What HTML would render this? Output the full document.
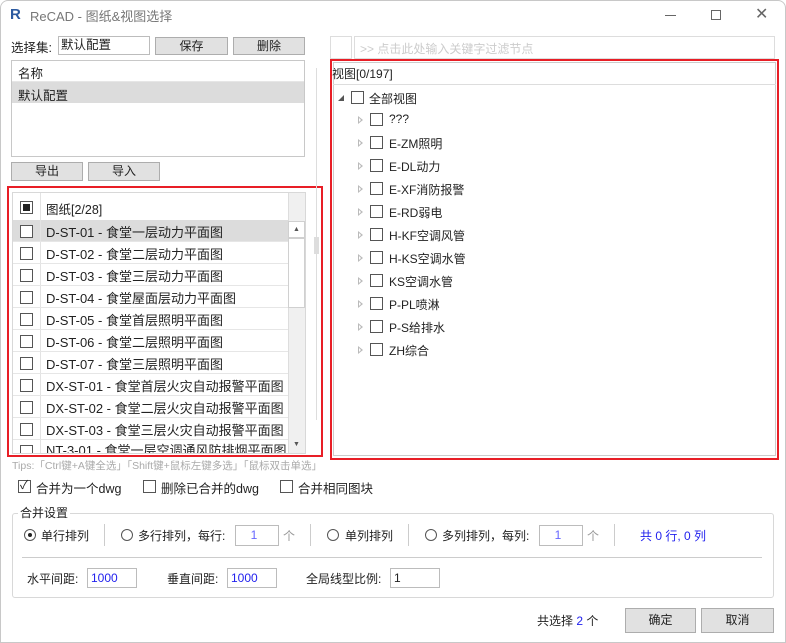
<!DOCTYPE html>
<html><head><meta charset="utf-8"><style>
*{box-sizing:border-box;margin:0;padding:0}
body{width:786px;height:643px;background:#fff;font-family:"Liberation Sans","Noto Sans CJK SC",sans-serif;font-size:12px;color:#222;position:relative;overflow:hidden}
.a{position:absolute;white-space:nowrap}
.btn{position:absolute;background:#e1e1e1;border:1px solid #adadad;text-align:center;font-size:12px;line-height:17px}
.inp{position:absolute;border:1px solid #bcbcbc;background:#fff}
.cb{position:absolute;width:13px;height:13px;border:1px solid #555;background:#fff}
.rb{position:absolute;width:12px;height:12px;border:1px solid #555;border-radius:50%;background:#fff}
.row{position:absolute;left:13px;width:275px;height:22px;border-bottom:1px solid #e6e6e6;font-size:13px}
.row .cb{left:7px;top:5px}
.row span{position:absolute;left:33px;top:2px}
.row i{position:absolute;left:27px;top:0;bottom:0;border-left:1px solid #e3e3e3}
.tri{position:absolute;width:0;height:0;border-top:4px solid transparent;border-bottom:4px solid transparent;border-left:5px solid #bbb}
.tri:after{content:"";position:absolute;left:-4px;top:-2px;border-top:2px solid transparent;border-bottom:2px solid transparent;border-left:2px solid #fff}
</style></head><body>
<div class="a" style="left:0;top:0;width:786px;height:643px;border:1px solid #c8c8c8;border-radius:8px 8px 0 0"></div>
<div class="a" style="left:10px;top:7px;width:12px;height:16px;font-weight:bold;color:#2c5aa0;font-size:15px;line-height:16px">R</div>
<div class="a" style="left:30px;top:6px;font-size:13px;color:#777">ReCAD - 图纸&amp;视图选择</div>
<div class="a" style="left:665px;top:15px;width:11px;border-top:1px solid #666"></div>
<div class="a" style="left:711px;top:10px;width:10px;height:10px;border:1px solid #666"></div>
<div class="a" style="left:755px;top:4px;font-size:16px;color:#666">✕</div>

<div class="a" style="left:11px;top:37px;font-size:12.5px">选择集:</div>
<div class="inp" style="left:58px;top:36px;width:92px;height:19px;padding-left:2px;font-size:12.5px;line-height:17px">默认配置</div>
<div class="btn" style="left:155px;top:37px;width:73px;height:18px">保存</div>
<div class="btn" style="left:233px;top:37px;width:72px;height:18px">删除</div>
<div class="a" style="left:11px;top:60px;width:294px;height:97px;border:1px solid #c8c8c8"></div>
<div class="a" style="left:12px;top:61px;width:292px;height:21px;border-bottom:1px solid #e6e6e6;padding:2px 6px;font-size:12.5px">名称</div>
<div class="a" style="left:12px;top:82px;width:292px;height:21px;background:#dcdcdc;padding:3px 6px;font-size:12.5px">默认配置</div>
<div class="btn" style="left:11px;top:162px;width:72px;height:19px">导出</div>
<div class="btn" style="left:88px;top:162px;width:72px;height:19px">导入</div>

<div class="a" style="left:12px;top:192px;width:294px;height:262px;border:1px solid #d8d8d8"></div>
<div class="a" style="left:13px;top:193px;width:275px;height:28px;border-bottom:1px solid #e3e3e3;font-size:12.5px">
 <div class="cb" style="left:7px;top:8px"><div style="position:absolute;left:2px;top:2px;width:7px;height:7px;background:#222"></div></div>
 <i style="position:absolute;left:27px;top:0;bottom:0;border-left:1px solid #e3e3e3"></i>
 <span style="position:absolute;left:33px;top:6px">图纸[2/28]</span>
</div>
<div class="row" style="top:220px;background:#dcdcdc"><div class="cb"></div><i></i><span>D-ST-01 - 食堂一层动力平面图</span></div>
<div class="row" style="top:242px"><div class="cb"></div><i></i><span>D-ST-02 - 食堂二层动力平面图</span></div>
<div class="row" style="top:264px"><div class="cb"></div><i></i><span>D-ST-03 - 食堂三层动力平面图</span></div>
<div class="row" style="top:286px"><div class="cb"></div><i></i><span>D-ST-04 - 食堂屋面层动力平面图</span></div>
<div class="row" style="top:308px"><div class="cb"></div><i></i><span>D-ST-05 - 食堂首层照明平面图</span></div>
<div class="row" style="top:330px"><div class="cb"></div><i></i><span>D-ST-06 - 食堂二层照明平面图</span></div>
<div class="row" style="top:352px"><div class="cb"></div><i></i><span>D-ST-07 - 食堂三层照明平面图</span></div>
<div class="row" style="top:374px"><div class="cb"></div><i></i><span>DX-ST-01 - 食堂首层火灾自动报警平面图</span></div>
<div class="row" style="top:396px"><div class="cb"></div><i></i><span>DX-ST-02 - 食堂二层火灾自动报警平面图</span></div>
<div class="row" style="top:418px"><div class="cb"></div><i></i><span>DX-ST-03 - 食堂三层火灾自动报警平面图</span></div>
<div class="a" style="left:13px;top:440px;width:275px;height:13px;overflow:hidden;font-size:13px"><div class="cb" style="left:7px;top:5px"></div><i style="position:absolute;left:27px;top:0;bottom:0;border-left:1px solid #e3e3e3"></i><span style="position:absolute;left:33px;top:0px">NT-3-01 - 食堂一层空调通风防排烟平面图</span></div>
<div class="a" style="left:288px;top:193px;width:17px;height:260px;background:#f0f0f0;border-left:1px solid #ddd"></div>
<div class="a" style="left:288px;top:221px;width:17px;height:17px;background:#fff;border:1px solid #d0d0d0;font-size:7px;color:#555;text-align:center;line-height:15px">▲</div>
<div class="a" style="left:288px;top:238px;width:17px;height:70px;background:#fff;border:1px solid #d0d0d0"></div>
<div class="a" style="left:288px;top:437px;width:17px;height:16px;font-size:7px;color:#555;text-align:center;line-height:16px">▼</div>
<div class="a" style="left:7px;top:186px;width:316px;height:271px;border:2px solid #e81e26"></div>
<div class="a" style="left:12px;top:458px;font-size:10.5px;color:#aaa">Tips:「Ctrl键+A键全选」「Shift键+鼠标左键多选」「鼠标双击单选」</div>
<div class="a" style="left:316px;top:68px;height:352px;border-left:1px solid #ddd"></div>
<div class="a" style="left:314px;top:237px;width:5px;height:17px;background:#ddd"></div>

<div class="cb" style="left:18px;top:480px"><div style="position:absolute;left:1px;top:-3px;font-size:12px;line-height:14px">✓</div></div>
<div class="a" style="left:36px;top:478px;font-size:12.5px">合并为一个dwg</div>
<div class="cb" style="left:143px;top:480px"></div>
<div class="a" style="left:161px;top:478px;font-size:12.5px">删除已合并的dwg</div>
<div class="cb" style="left:280px;top:480px"></div>
<div class="a" style="left:298px;top:478px;font-size:12.5px">合并相同图块</div>

<div class="a" style="left:12px;top:513px;width:762px;height:85px;border:1px solid #d8d8d8;border-radius:3px"></div>
<div class="a" style="left:18px;top:504px;background:#fff;padding:0 2px">合并设置</div>
<div class="rb" style="left:24px;top:529px"><div style="position:absolute;left:3px;top:3px;width:4px;height:4px;border-radius:50%;background:#222"></div></div>
<div class="a" style="left:41px;top:527px">单行排列</div>
<div class="a" style="left:104px;top:524px;height:22px;border-left:1px solid #ccc"></div>
<div class="rb" style="left:121px;top:529px"></div>
<div class="a" style="left:138px;top:527px">多行排列，每行:</div>
<div class="inp" style="left:235px;top:525px;width:44px;height:21px;color:#66f;text-align:center;line-height:19px;padding-right:6px">1</div>
<div class="a" style="left:283px;top:527px;color:#999">个</div>
<div class="a" style="left:310px;top:524px;height:22px;border-left:1px solid #ccc"></div>
<div class="rb" style="left:327px;top:529px"></div>
<div class="a" style="left:345px;top:527px">单列排列</div>
<div class="a" style="left:408px;top:524px;height:22px;border-left:1px solid #ccc"></div>
<div class="rb" style="left:425px;top:529px"></div>
<div class="a" style="left:442px;top:527px">多列排列，每列:</div>
<div class="inp" style="left:539px;top:525px;width:44px;height:21px;color:#66f;text-align:center;line-height:19px;padding-right:6px">1</div>
<div class="a" style="left:587px;top:527px;color:#999">个</div>
<div class="a" style="left:614px;top:524px;height:22px;border-left:1px solid #ccc"></div>
<div class="a" style="left:640px;top:527px;color:#22e">共 0 行, 0 列</div>
<div class="a" style="left:22px;top:557px;width:740px;border-top:1px solid #ccc"></div>
<div class="a" style="left:27px;top:570px">水平间距:</div>
<div class="inp" style="left:87px;top:568px;width:50px;height:20px;color:#22e;padding-left:3px;line-height:18px">1000</div>
<div class="a" style="left:167px;top:570px">垂直间距:</div>
<div class="inp" style="left:227px;top:568px;width:50px;height:20px;color:#22e;padding-left:3px;line-height:18px">1000</div>
<div class="a" style="left:306px;top:570px">全局线型比例:</div>
<div class="inp" style="left:390px;top:568px;width:50px;height:20px;padding-left:3px;line-height:18px">1</div>

<div class="a" style="left:537px;top:612px">共选择 <span style="color:#22e">2</span> 个</div>
<div class="btn" style="left:625px;top:608px;width:71px;height:25px;line-height:23px">确定</div>
<div class="btn" style="left:701px;top:608px;width:73px;height:25px;line-height:23px">取消</div>

<div class="a" style="left:330px;top:36px;width:22px;height:23px;border:1px solid #ddd"></div>
<div class="a" style="left:354px;top:36px;width:421px;height:23px;border:1px solid #ddd;color:#ccc;padding:3px 5px">&gt;&gt; 点击此处输入关键字过滤节点</div>
<div class="a" style="left:333px;top:62px;width:443px;height:394px;border:1px solid #ccc"></div>
<div class="a" style="left:333px;top:84px;width:443px;border-top:1px solid #ddd"></div>
<div class="a" style="left:332px;top:65px">视图[0/197]</div>
<div class="a" style="left:338px;top:95px;width:0;height:0;border-left:6px solid transparent;border-bottom:6px solid #555"></div>
<div class="cb" style="left:351px;top:91px"></div>
<div class="a" style="left:369px;top:90px">全部视图</div>
<div class="tri" style="left:358px;top:116px"></div><div class="cb" style="left:370px;top:113px"></div><div class="a" style="left:389px;top:112px">???</div>
<div class="tri" style="left:358px;top:139px"></div><div class="cb" style="left:370px;top:136px"></div><div class="a" style="left:389px;top:135px">E-ZM照明</div>
<div class="tri" style="left:358px;top:162px"></div><div class="cb" style="left:370px;top:159px"></div><div class="a" style="left:389px;top:158px">E-DL动力</div>
<div class="tri" style="left:358px;top:185px"></div><div class="cb" style="left:370px;top:182px"></div><div class="a" style="left:389px;top:181px">E-XF消防报警</div>
<div class="tri" style="left:358px;top:208px"></div><div class="cb" style="left:370px;top:205px"></div><div class="a" style="left:389px;top:204px">E-RD弱电</div>
<div class="tri" style="left:358px;top:231px"></div><div class="cb" style="left:370px;top:228px"></div><div class="a" style="left:389px;top:227px">H-KF空调风管</div>
<div class="tri" style="left:358px;top:254px"></div><div class="cb" style="left:370px;top:251px"></div><div class="a" style="left:389px;top:250px">H-KS空调水管</div>
<div class="tri" style="left:358px;top:277px"></div><div class="cb" style="left:370px;top:274px"></div><div class="a" style="left:389px;top:273px">KS空调水管</div>
<div class="tri" style="left:358px;top:300px"></div><div class="cb" style="left:370px;top:297px"></div><div class="a" style="left:389px;top:296px">P-PL喷淋</div>
<div class="tri" style="left:358px;top:323px"></div><div class="cb" style="left:370px;top:320px"></div><div class="a" style="left:389px;top:319px">P-S给排水</div>
<div class="tri" style="left:358px;top:346px"></div><div class="cb" style="left:370px;top:343px"></div><div class="a" style="left:389px;top:342px">ZH综合</div>
<div class="a" style="left:330px;top:59px;width:449px;height:401px;border:2px solid #e81e26"></div>
</body></html>
